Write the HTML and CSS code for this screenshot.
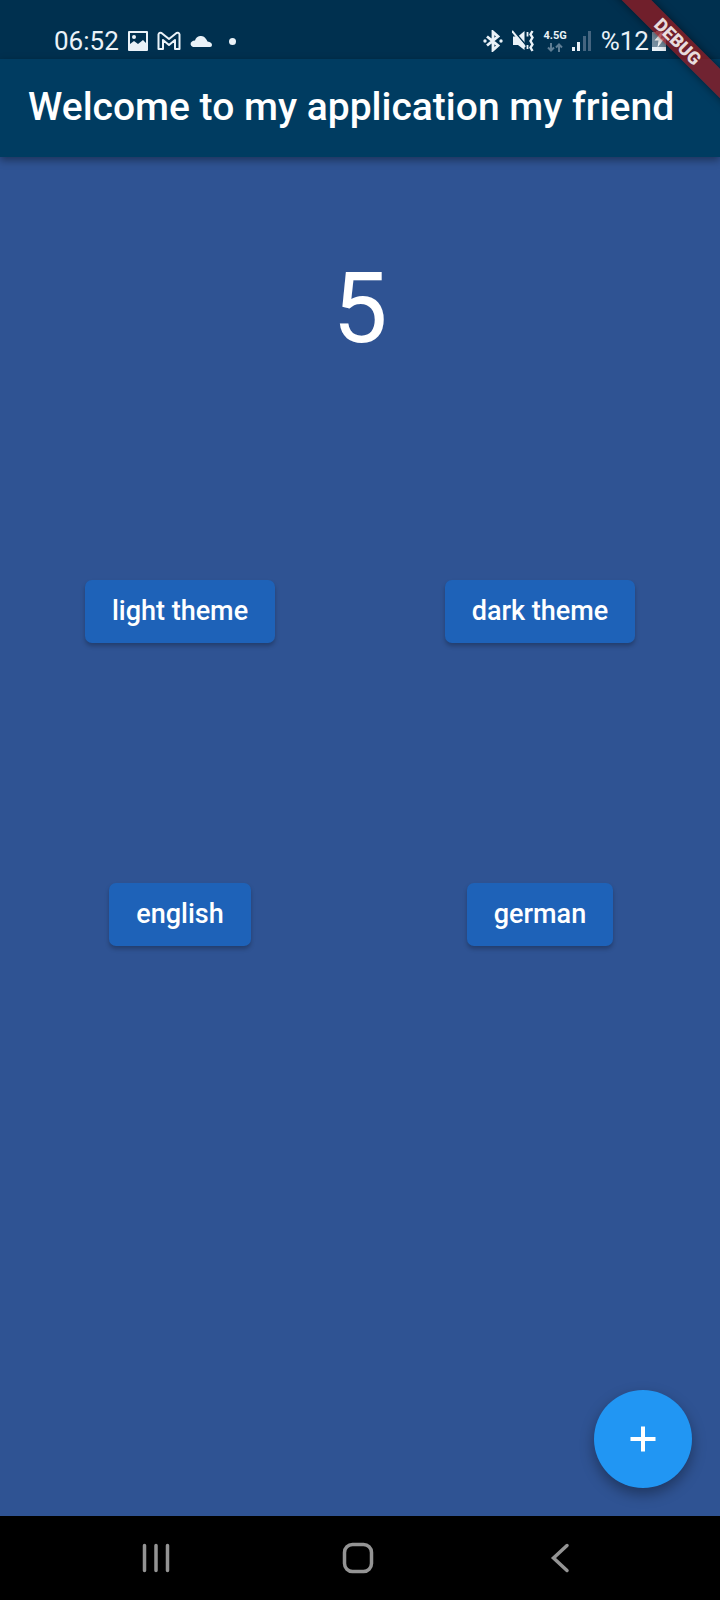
FILE: index.html
```html
<!DOCTYPE html>
<html lang="en">
<head>
<meta charset="utf-8">
<meta name="viewport" content="width=device-width, initial-scale=1">
<title>Welcome to my application my friend</title>
<link rel="stylesheet" href="styles.css">
</head>
<body>
<div class="screen">
  <div class="status-bar">
    <div class="status-group status-left">
      <span class="status-text">06:52</span>
      <svg width="22" height="22" viewBox="0 0 22 22" aria-hidden="true"><path fill="currentColor" fill-rule="evenodd" d="M2 1h18a1 1 0 0 1 1 1v18a1 1 0 0 1-1 1H2a1 1 0 0 1-1-1V2a1 1 0 0 1 1-1zm1 2v11l4-3 4 3 5-4 3 3V3zm4 2a2 2 0 1 1 0 4 2 2 0 0 1 0-4z"/></svg>
      <svg width="24" height="20" viewBox="0 0 24 20" fill="none" stroke="currentColor" stroke-width="2" stroke-linejoin="round" aria-hidden="true"><path d="M1.500 18V3.500Q2 1 4.500 2L12 8l7.500-6Q22 1 22.500 3.500V18h-4.500V9l-6 5-6-5v9z"/></svg>
      <svg width="24" height="16" viewBox="0 0 24 16" fill="currentColor" aria-hidden="true"><path d="M4 14a3 3 0 0 1-1-5.500q1-.8 3-1A6 6 0 0 1 17 6q1 1 1.500 2.500Q23 9 23 12a2 2 0 0 1-2 2z"/></svg>
      <span class="dot"></span>
    </div>
    <div class="status-group">
      <svg width="20" height="22" viewBox="0 0 20 22" aria-hidden="true"><path d="M4 6.500 15 15.500l-5 4.500V2l5 4.500-11 9" fill="none" stroke="currentColor" stroke-width="2.800"/><circle cx="2" cy="11" r="1.700" fill="currentColor"/><circle cx="18" cy="11" r="1.700" fill="currentColor"/></svg>
      <svg width="22" height="22" viewBox="0 0 22 22" aria-hidden="true"><path d="M1 6.500h5L12.500 1v19L6 15H1z" fill="currentColor"/><path d="M1 0l12 14" stroke="#00304f" stroke-width="1.500"/><path d="M0 1l13 16" stroke="currentColor" stroke-width="2"/><path d="M15.500 2v4.500M15.500 15v4" stroke="currentColor" stroke-width="1.800"/><path d="M20.500 1l-2 3.500 2 3-2 3.500 2 3.500-2 3 2 3.500" fill="none" stroke="currentColor" stroke-width="2.400"/></svg>
      <span class="network"><span>4.5G</span><svg width="16" height="9" viewBox="0 0 16 9" fill="none" stroke="#5e7d94" stroke-width="2" aria-hidden="true"><path d="M4 0v8M1 4.500l3 3 3-3M12 9V1M9 4.500l3-3 3 3"/></svg></span>
      <svg width="20" height="22" viewBox="0 0 20 22" aria-hidden="true"><path d="M0 17h3v4H0zM5 12h3v9H5z" fill="currentColor"/><path d="M11 6h3v15h-3zM16 1h3v20h-3z" fill="#456580"/></svg>
      <span class="status-text">%12</span>
      <svg class="battery" width="14" height="20" viewBox="0 0 14 20" aria-hidden="true"><path d="M0 1h4V0h6v1h4v16H0z" fill="#7890a2"/><path d="M0 16h14v4H0z" fill="currentColor"/><path d="M8.500 2 2.500 9.500h4l-1 7 7-9h-4l2-5.500z" fill="#fff"/></svg>
    </div>
  </div>
  <header class="app-bar"><h1>Welcome to my application my friend</h1></header>
  <main class="content">
    <div class="counter">5</div>
    <div class="button-cell"><button class="button" type="button">light theme</button></div>
    <div class="button-cell"><button class="button" type="button">dark theme</button></div>
    <div class="button-cell"><button class="button" type="button">english</button></div>
    <div class="button-cell"><button class="button" type="button">german</button></div>
    <button class="fab" type="button" aria-label="Increment"><svg width="42" height="42" viewBox="0 0 42 42" stroke="#fff" stroke-width="4" aria-hidden="true"><path d="M21 8.500v25M8.500 21h25"/></svg></button>
  </main>
  <nav class="nav-bar">
    <button type="button" aria-label="Recent apps"><svg width="34" height="34" viewBox="0 0 34 34" fill="none" stroke="currentColor" stroke-width="3.500" stroke-linecap="round"><path d="M5.500 4.500v25M17 4.500v25M28.500 4.500v25"/></svg></button>
    <button type="button" aria-label="Home"><svg width="34" height="34" viewBox="0 0 34 34" fill="none" stroke="currentColor" stroke-width="3.500"><rect x="3.500" y="3.500" width="27" height="27" rx="8"/></svg></button>
    <button type="button" aria-label="Back"><svg width="34" height="34" viewBox="0 0 34 34" fill="none" stroke="currentColor" stroke-width="3.500" stroke-linecap="round"><path d="M24 4.500 10.500 17 24 29.500"/></svg></button>
  </nav>
  <div class="debug-corner"><span class="debug-ribbon">DEBUG</span></div>
</div>
</body>
</html>
```
FILE: styles.css
```css
* {
  box-sizing: border-box;
}

body {
  margin: 0;
  font-family: Roboto, "Liberation Sans", sans-serif;
  color: #fff;
  background: #2f5393;
}

button {
  border: 0;
  padding: 0;
  font: inherit;
  color: inherit;
  background: none;
  cursor: pointer;
}

svg {
  display: block;
  flex: none;
}

.screen {
  position: relative;
  display: flex;
  flex-direction: column;
  min-height: 100vh;
  overflow: hidden;
}

.status-bar {
  display: flex;
  justify-content: space-between;
  padding: 23px 54px 0;
  color: #eaf2f8;
  background: #00304f;
}

.status-group {
  display: flex;
  align-items: center;
  gap: 9px;
  height: 36px;
}

.status-left {
  gap: 8px;
}

.status-text {
  font-size: 26px;
  line-height: 36px;
}

.dot {
  width: 7px;
  height: 7px;
  margin-left: 8px;
  border-radius: 50%;
  background: currentColor;
}

.network {
  display: flex;
  flex-direction: column;
  align-items: center;
  gap: 2px;
  margin-right: -4px;
  font-size: 11px;
  font-weight: 700;
  line-height: 10px;
}

.battery {
  margin-left: -6px;
}

.app-bar {
  position: relative;
  display: flex;
  align-items: center;
  min-height: 98px;
  padding: 0 28px 2px;
  background: #003c61;
  box-shadow: 0 3px 8px rgba(0, 0, 0, 0.4);
}

.app-bar h1 {
  margin: 0;
  font-size: 39px;
  font-weight: 500;
  line-height: 46px;
  white-space: nowrap;
}

.content {
  position: relative;
  flex: 1;
  display: grid;
  grid-template-columns: 1fr 1fr;
  grid-template-rows: 1fr 1fr 1fr;
  padding-bottom: 450px;
}

.counter {
  grid-column: 1 / -1;
  display: flex;
  align-items: center;
  justify-content: center;
  font-size: 98px;
  line-height: 114px;
}

.button-cell {
  display: flex;
  align-items: center;
  justify-content: center;
}

.button {
  min-height: 63px;
  padding: 0 27px 2px;
  border-radius: 7px;
  font-size: 27px;
  font-weight: 500;
  background: #1e62b8;
  box-shadow: 0 3px 4px rgba(0, 0, 0, 0.25);
}

.fab {
  position: absolute;
  right: 28px;
  bottom: 28px;
  display: grid;
  place-items: center;
  width: 98px;
  height: 98px;
  border-radius: 50%;
  background: #2196f3;
  box-shadow: 0 6px 14px rgba(0, 0, 0, 0.35);
}

.nav-bar {
  display: flex;
  align-items: center;
  justify-content: center;
  gap: 168px;
  height: 84px;
  padding-right: 4px;
  color: #949494;
  background: #000;
}

.debug-corner {
  position: absolute;
  top: 0;
  right: 0;
  width: 120px;
  height: 120px;
  overflow: hidden;
}

.debug-ribbon {
  position: absolute;
  top: 31px;
  right: -58px;
  width: 200px;
  color: rgba(255, 255, 255, 0.85);
  background: rgba(160, 24, 28, 0.7);
  box-shadow: 0 0 8px rgba(0, 0, 0, 0.5);
  font-size: 18px;
  font-weight: 900;
  line-height: 21px;
  text-align: center;
  transform: rotate(45deg);
}
```
